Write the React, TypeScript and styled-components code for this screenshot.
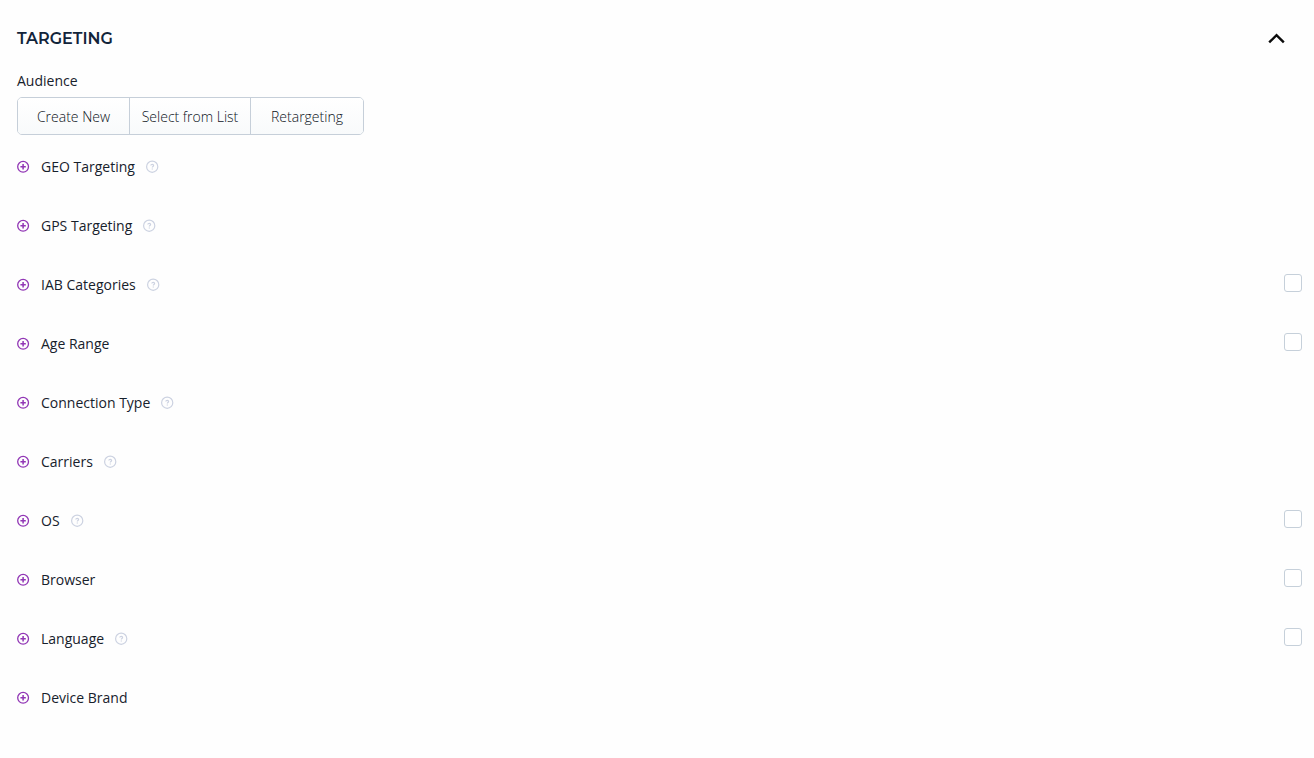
import React from 'react';
import styled, { createGlobalStyle } from 'styled-components';

const GlobalStyle = createGlobalStyle`
  * { box-sizing: border-box; }
  body {
    margin: 0;
    background: #fefefe;
    color: #17212c;
    font-family: 'Open Sans', 'Noto Sans', sans-serif;
    font-size: 14px;
    line-height: 20px;
  }
  button { font: inherit; color: inherit; cursor: pointer; }
`;

const Panel = styled.main`
  padding: 24px 12px 24px 17px;
`;

const Header = styled.header`
  display: flex;
  align-items: center;
  justify-content: space-between;
  height: 29px;
  padding-right: 17px;
`;

const Title = styled.h2`
  margin: 0;
  font-family: Montserrat, Inter, sans-serif;
  font-size: 16px;
  font-weight: 600;
  color: #12243a;
`;

const IconButton = styled.button`
  display: flex;
  padding: 0;
  border: 0;
  background: none;
`;

const Audience = styled.section`
  padding-top: 18px;
`;

const AudienceLabel = styled.div`
  height: 26px;
`;

const ButtonGroup = styled.div`
  display: inline-grid;
  grid-template-columns: 111px 121px 113px;
  height: 38px;
  border: 1px solid #c6cfd9;
  border-radius: 5px;
  overflow: hidden;
  vertical-align: top;
`;

const GroupButton = styled.button`
  padding: 2px 0 0;
  border: 0;
  background: linear-gradient(#ffffff, #f8fafb);
  color: #0c131b;
  font-weight: 300;

  & + & { border-left: 1px solid #c6cfd9; }
`;

const Options = styled.ul`
  margin: 0;
  padding: 2px 0 0;
  list-style: none;
`;

const Option = styled.li`
  display: flex;
  align-items: center;
  justify-content: space-between;
  height: 59px;
`;

const OptionName = styled.div`
  display: flex;
  align-items: center;
`;

const ExpandButton = styled(IconButton)`
  align-items: center;
  gap: 11px;
`;

const HelpButton = styled(IconButton)`
  margin-left: 11px;
`;

const Checkbox = styled.input`
  appearance: none;
  width: 18px;
  height: 18px;
  margin: 0 0 4px;
  border: 1px solid #c6d0da;
  border-radius: 3px;
  background: #fff;
  cursor: pointer;

  &:checked { background: #8e35b5; }
`;

const PlusIcon = () => (
  <svg width="13" height="13" viewBox="0 0 13 13" fill="none" stroke="#9136b5" aria-hidden="true">
    <circle cx="6.1" cy="6.8" r="5.4" strokeWidth="1.3" />
    <path d="M6.1 4.1v5.4M3.4 6.8h5.4" strokeWidth="1.5" />
  </svg>
);

const HelpIcon = () => (
  <svg width="13" height="13" viewBox="0 0 13 13" fill="none" stroke="#ccd2e1" aria-hidden="true">
    <circle cx="6.2" cy="6.7" r="5.6" strokeWidth="1.2" />
    <path d="M4.9 5.6c0-1.7 2.7-1.6 2.7 0 0 1-1.3 1-1.3 2M6.3 8.4v1.1" strokeWidth="1.2" />
  </svg>
);

const ChevronUp = () => (
  <svg width="17" height="11" viewBox="0 0 17 11" fill="none" stroke="#0b0b0b" strokeWidth="2.4" aria-hidden="true">
    <path d="M1.2 9.4 8.5 2.1l7.3 7.3" />
  </svg>
);

const options = [
  { name: 'GEO Targeting', help: true },
  { name: 'GPS Targeting', help: true },
  { name: 'IAB Categories', help: true, selectable: true },
  { name: 'Age Range', selectable: true },
  { name: 'Connection Type', help: true },
  { name: 'Carriers', help: true },
  { name: 'OS', help: true, selectable: true },
  { name: 'Browser', selectable: true },
  { name: 'Language', help: true, selectable: true },
  { name: 'Device Brand' },
];

export default function App() {
  return (
    <>
      <GlobalStyle />
      <Panel>
        <Header>
          <Title>TARGETING</Title>
          <IconButton type="button" aria-label="Collapse targeting"><ChevronUp /></IconButton>
        </Header>
        <Audience>
          <AudienceLabel id="audience">Audience</AudienceLabel>
          <ButtonGroup role="group" aria-labelledby="audience">
            <GroupButton type="button">Create New</GroupButton>
            <GroupButton type="button">Select from List</GroupButton>
            <GroupButton type="button">Retargeting</GroupButton>
          </ButtonGroup>
        </Audience>
        <Options>
          {options.map(({ name, help, selectable }) => (
            <Option key={name}>
              <OptionName>
                <ExpandButton type="button"><PlusIcon />{name}</ExpandButton>
                {help && <HelpButton type="button" aria-label={`Help for ${name}`}><HelpIcon /></HelpButton>}
              </OptionName>
              {selectable && <Checkbox type="checkbox" aria-label={name} />}
            </Option>
          ))}
        </Options>
      </Panel>
    </>
  );
}
